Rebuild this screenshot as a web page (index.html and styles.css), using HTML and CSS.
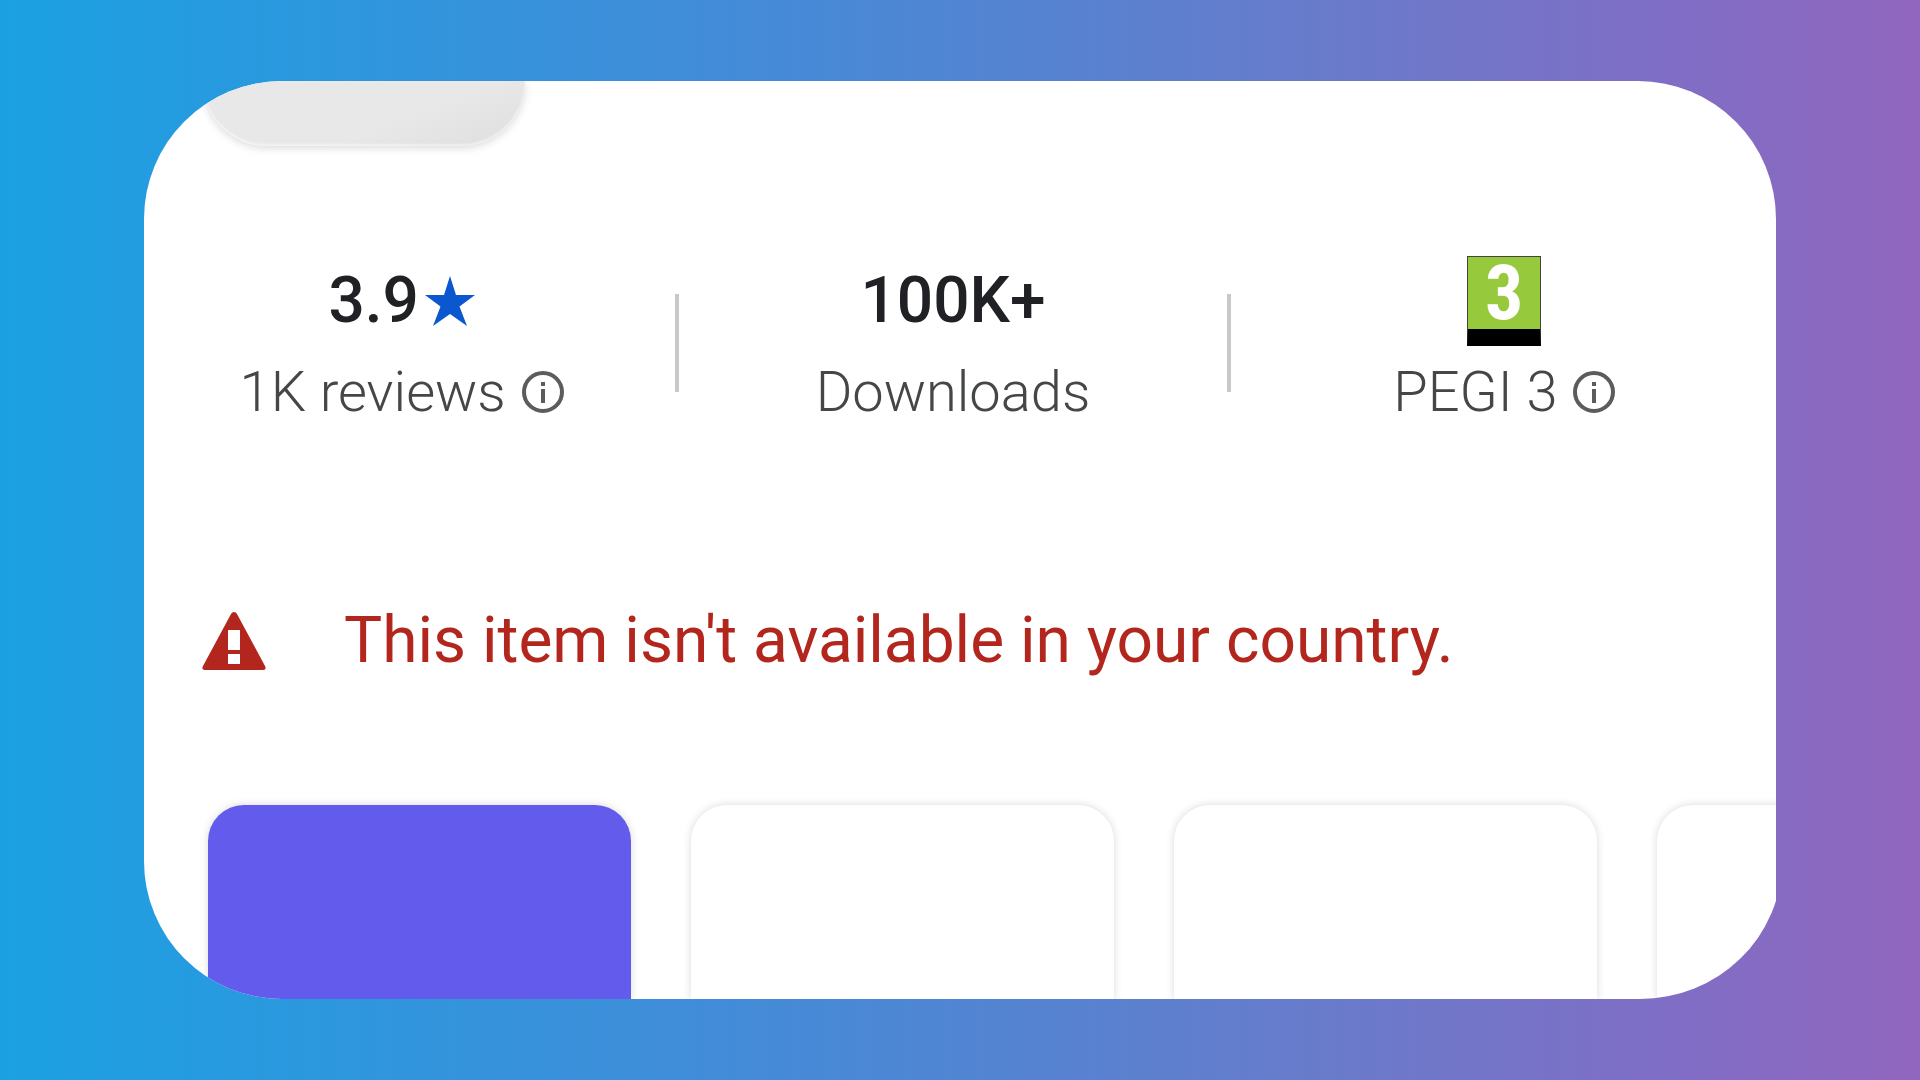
FILE: index.html
```html
<!DOCTYPE html>
<html lang="en">
	<head>
		<meta charset="UTF-8">
		<meta name="viewport" content="width=device-width, initial-scale=1.0">
		<title>App listing</title>
		<link rel="stylesheet" href="styles.css">
	</head>
	<body>
		<div class="frame">
			<main class="panel">
				<div class="app_icon"></div>
				<div class="stats">
					<div class="stat">
						<div class="value">3.9
							<svg class="star" viewBox="0 0 50 50"><path d="M25 0l6 19h19L34.500 30.500 42 50 25 38 8 50l7.500-19.500L0 19h19z"/></svg>
						</div>
						<div class="label">1K reviews
							<svg class="info" viewBox="0 0 42 42"><circle cx="21" cy="21" r="19"/><path d="M21 11v4M21 18v14"/></svg>
						</div>
					</div>
					<div class="stat">
						<div class="value">100K+</div>
						<div class="label">Downloads</div>
					</div>
					<div class="stat">
						<div class="value"><span class="pegi">3</span></div>
						<div class="label">PEGI 3
							<svg class="info" viewBox="0 0 42 42"><circle cx="21" cy="21" r="19"/><path d="M21 11v4M21 18v14"/></svg>
						</div>
					</div>
				</div>
				<div class="notice">
					<svg class="warning" viewBox="0 0 64 58"><path class="tri" d="M32 0q2 0 3 2l28 52q2 4-2 4H3q-4 0-2-4L29 2q1-2 3-2z"/><path class="mark" d="M26 18h12v20H26zM26 42h12v10H26z"/></svg>
					<p>This item isn't available in your country.</p>
				</div>
				<div class="shots">
					<div class="shot purple"></div>
					<div class="shot"></div>
					<div class="shot"></div>
					<div class="shot"></div>
				</div>
			</main>
		</div>
	</body>
</html>
```

FILE: styles.css
```css
*{
	margin: 0;
	padding: 0;
	box-sizing: border-box;
}
body{
	min-height: 100vh;
	padding: 81px 144px;
	display: flex;
	background: linear-gradient(90deg, #1ba1e2 0%, #448bd8 39%, #5a81cf 58%, #697bcb 69%, #816dc5 88%, #9166be 100%);
	font-family: Roboto, "Liberation Sans", sans-serif;
}
.frame{
	flex: 1;
	min-width: 0;
	display: flex;
	border-radius: 138px 138px 0 138px;
	overflow: hidden;
}
/*wider than the frame, so the last corner is cut off*/
.panel{
	flex: none;
	width: calc(100% + 6px);
	display: flex;
	flex-direction: column;
	background: white;
	border-radius: 0 0 142px 0 / 0 0 138px 0;
	overflow: hidden;
}
.app_icon{
	width: 322px;
	height: 65px;
	margin-left: 59px;
	border-radius: 0 0 64px 64px;
	background: linear-gradient(160deg, #e8e8e8 60%, #dedede);
	box-shadow: 0 2px 8px rgba(0,0,0,0.15), inset 0 -2px 2px rgba(255,255,255,0.5);
}
.stats{
	display: grid;
	grid-template-columns: repeat(3, 1fr);
	margin: 109px 2px 0 -18px;
}
.stat{
	position: relative;
	text-align: center;
}
.stat + .stat::before{
	content: "";
	position: absolute;
	left: -2px;
	top: 39px;
	width: 4px;
	height: 98px;
	background: #c8c8c8;
}
.value{
	height: 92px;
	display: flex;
	justify-content: center;
	align-items: center;
	gap: 6px;
	font-size: 64px;
	font-weight: 500;
	line-height: 92px;
	color: #202124;
}
.star{
	width: 50px;
	height: 50px;
	fill: #0b57d0;
}
.pegi{
	width: 74px;
	height: 90px;
	border: 1px solid #444;
	border-bottom: 17px solid black;
	background: #97c93d;
	color: white;
	font: bold 76px/72px "Roboto Condensed", Roboto, sans-serif;
}
.label{
	display: flex;
	justify-content: center;
	align-items: center;
	gap: 16px;
	font-size: 56px;
	line-height: 90px;
	font-weight: 300;
	color: #444746;
}
.info{
	width: 42px;
	height: 42px;
	fill: none;
	stroke: #5a5d5c;
	stroke-width: 4;
}
.notice{
	display: flex;
	align-items: center;
	gap: 78px;
	margin: 164px 0 0 58px;
	font-size: 64px;
	line-height: 80px;
	color: #b3261e;
}
.warning{
	width: 64px;
	height: 58px;
}
.tri{
	fill: #b3261e;
}
.mark{
	fill: white;
}
.shots{
	flex: 1;
	min-height: 194px;
	display: flex;
	gap: 60px;
	margin: 124px 0 0 64px;
}
.shot{
	flex: none;
	width: 423px;
	border-radius: 36px 36px 0 0;
	box-shadow: 0 0 8px rgba(0,0,0,0.15);
}
.purple{
	background: #625bec;
}
```
